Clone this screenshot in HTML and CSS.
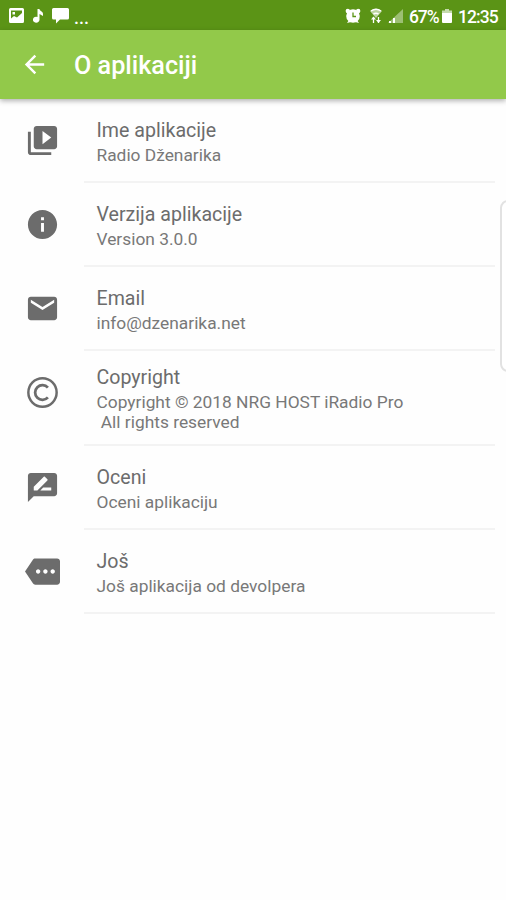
FILE: index.html
```
<!DOCTYPE html>
<html lang="bs">
<head>
  <meta charset="UTF-8">
  <meta name="viewport" content="width=device-width, initial-scale=1.0">
  <title>O aplikaciji</title>
  <link rel="stylesheet" href="styles.css">
</head>
<body>
  <div class="status-bar">
    <div class="status-left">
      <svg width="15" height="15" viewBox="0 0 15 15"><path fill="#fff" fill-rule="evenodd" d="M1.500 0h12a1.500 1.500 0 0 1 1.500 1.500v12a1.500 1.500 0 0 1-1.500 1.500h-12a1.500 1.500 0 0 1-1.500-1.500v-12a1.500 1.500 0 0 1 1.500-1.500zM2 2.500v8l3-2.500 3 1.500 5-4.500V2.500zM3.500 4h2.500v2.500h-2.500z"/></svg>
      <svg class="note" width="10" height="14" viewBox="0 0 10 14"><path fill="#fff" d="M4.500 0h2c0 2 3.500 2 3.500 5v2L6.500 5v5.500A3.300 3 0 1 1 4.500 8z"/></svg>
      <svg class="bubble" width="17" height="16" viewBox="0 0 17 16"><path fill="#fff" d="M1.500 0h14a1.500 1.500 0 0 1 1.500 1.500v8.500a1.500 1.500 0 0 1-1.500 1.500H8l-4 4V11.500H1.500A1.500 1.500 0 0 1 0 10v-8.500A1.500 1.500 0 0 1 1.500 0z"/></svg>
      <span class="dots">...</span>
    </div>
    <div class="status-right">
      <svg width="16" height="16" viewBox="0 0 16 16"><g fill="#fff"><circle cx="8" cy="8" r="6.800"/><circle cx="2.800" cy="3" r="2.200"/><circle cx="13.200" cy="3" r="2.200"/><path d="M2 15l2-3 2 2zM14 15l-2-3-2 2z"/></g><path d="M8 4.500V8.500h3" fill="none" stroke="#5b9416" stroke-width="1.300"/></svg>
      <svg class="wifi" width="12" height="15" viewBox="0 0 12 15"><path d="M0 3Q6-1.500 12 3L6 10z" fill="#fff" opacity=".6"/><path d="M1 3Q6-.5 11 3M3.500 6Q6 4.500 8.500 6" fill="none" stroke="#fff" stroke-width="1.500"/><path d="M3.500 9v6M8.500 9v6" fill="none" stroke="#fff" stroke-width="1.300"/><path d="M1 11.500l2.500-3 2.500 3zM6 12l2.500 3 2.500-3z" fill="#fff"/></svg>
      <svg class="signal" width="15" height="14" viewBox="0 0 15 14"><path fill="#fff" opacity=".4" d="M15 0v14H0z"/><path fill="#fff" d="M1 12h2v2H1zM5 9h2v5H5z"/></svg>
      <span class="battery-text">67%</span>
      <svg class="battery" width="10" height="14" viewBox="0 0 10 14"><path fill="#fff" opacity=".65" d="M3 0h4v1.500h3V5H0V1.500h3z"/><path fill="#fff" d="M0 4h10v9a1 1 0 0 1-1 1H1a1 1 0 0 1-1-1z"/></svg>
      <span class="clock">12:35</span>
    </div>
  </div>

  <header class="toolbar">
    <svg class="back" width="29" height="29" viewBox="0 0 24 24"><path fill="#fff" d="M20 11H7.830l5.590-5.590L12 4l-8 8 8 8 1.410-1.410L7.830 13H20v-2z"/></svg>
    <h1>O aplikaciji</h1>
  </header>

  <main class="list">
    <div class="item">
      <svg class="icon" viewBox="0 0 24 24"><path d="M4 6H2v14c0 1.100.9 2 2 2h14v-2H4V6zm16-4H8c-1.100 0-2 .9-2 2v12c0 1.100.9 2 2 2h12c1.100 0 2-.9 2-2V4c0-1.100-.9-2-2-2zm-8 12.500v-9l6 4.500-6 4.500z"/></svg>
      <div class="item-text">
        <div class="title">Ime aplikacije</div>
        <div class="subtitle">Radio Dženarika</div>
      </div>
    </div>
    <div class="item">
      <svg class="icon" viewBox="0 0 24 24"><path d="M12 2C6.480 2 2 6.480 2 12s4.480 10 10 10 10-4.480 10-10S17.520 2 12 2zm1 15h-2v-6h2v6zm0-8h-2V7h2v2z"/></svg>
      <div class="item-text">
        <div class="title">Verzija aplikacije</div>
        <div class="subtitle">Version 3.0.0</div>
      </div>
    </div>
    <div class="item">
      <svg class="icon" viewBox="0 0 24 24"><path d="M20 4H4c-1.100 0-1.990.9-1.990 2L2 18c0 1.100.9 2 2 2h16c1.100 0 2-.9 2-2V6c0-1.100-.9-2-2-2zm0 4l-8 5-8-5V6l8 5 8-5v2z"/></svg>
      <div class="item-text">
        <div class="title">Email</div>
        <div class="subtitle">info@dzenarika.net</div>
      </div>
    </div>
    <div class="item">
      <svg class="icon" viewBox="0 0 24 24"><g fill="none" stroke="#6c6c6c"><circle cx="12" cy="12" r="9.700" stroke-width="1.700"/><path d="M15.700 8.700A5 5 0 1 0 15.700 15.300" stroke-width="1.900"/></g></svg>
      <div class="item-text">
        <div class="title">Copyright</div>
        <div class="subtitle">Copyright © 2018 NRG HOST iRadio Pro<br>&nbsp;All rights reserved</div>
      </div>
    </div>
    <div class="item">
      <svg class="icon" viewBox="0 0 24 24"><path d="M20 2H4c-1.100 0-1.990.9-1.990 2L2 22l4-4h14c1.100 0 2-.9 2-2V4c0-1.100-.9-2-2-2zM6 14v-2.470l6.880-6.880c.2-.2.510-.2.710 0l1.770 1.770c.2.2.2.510 0 .710L8.470 14H6zm12 0h-7.500l2-2H18v2z"/></svg>
      <div class="item-text">
        <div class="title">Oceni</div>
        <div class="subtitle">Oceni aplikaciju</div>
      </div>
    </div>
    <div class="item">
      <svg class="icon" viewBox="0 0 24 24"><path d="M22 3H7c-.690 0-1.230.350-1.590.880L0 12l5.410 8.110c.360.530.970.890 1.660.890H22c1.100 0 2-.9 2-2V5c0-1.100-.9-2-2-2zM9 13.500c-.830 0-1.500-.670-1.500-1.500s.670-1.500 1.500-1.500 1.500.670 1.500 1.500-.670 1.500-1.500 1.500zm5 0c-.830 0-1.500-.670-1.500-1.500s.670-1.500 1.500-1.500 1.500.670 1.500 1.500-.670 1.500-1.500 1.500zm5 0c-.830 0-1.500-.670-1.500-1.500s.670-1.500 1.500-1.500 1.500.670 1.500 1.500-.670 1.500-1.500 1.500z"/></svg>
      <div class="item-text">
        <div class="title">Još</div>
        <div class="subtitle">Još aplikacija od devolpera</div>
      </div>
    </div>
  </main>

  <!-- edge panel handle -->
  <div class="edge-handle"></div>
</body>
</html>
```

FILE: styles.css
```
* {
  box-sizing: border-box;
}
body {
  margin: 0;
  height: 900px;
  position: relative;
  overflow: hidden;
  background-color: #fefefe;
  font-family: Roboto, sans-serif;
}
svg {
  display: block;
  flex-shrink: 0;
}
.status-bar {
  height: 30px;
  padding: 0 8px 0 9px;
  display: flex;
  justify-content: space-between;
  background-color: #5b9416;
  color: #fff;
}
.status-left,
.status-right {
  display: flex;
  align-items: center;
  height: 31px;
}
.note {
  margin-left: 9px;
}
.bubble {
  margin-left: 9px;
}
.dots {
  margin: 3px 0 0 5px;
  font-size: 18px;
  font-weight: 500;
}
.wifi {
  margin-left: 9px;
}
.signal {
  margin-left: 6px;
}
.battery-text {
  width: 29px;
  margin: 2px 0 0 6px;
  font-size: 17.500px;
  font-weight: 500;
  letter-spacing: -1.100px;
}
.battery {
  margin-left: 4px;
}
.clock {
  width: 40px;
  margin: 2px 0 0 6px;
  font-size: 17.500px;
  font-weight: 500;
  letter-spacing: -0.900px;
}
.toolbar {
  height: 69px;
  padding-left: 20px;
  display: flex;
  align-items: center;
  background-color: #92c94a;
  color: #fff;
  box-shadow: 0 2px 5px rgba(0, 0, 0, 0.3);
}
.toolbar h1 {
  margin: 2px 0 0 25px;
  font-size: 25.200px;
  font-weight: 500;
}
.item {
  min-height: 84px;
  display: flex;
  align-items: flex-start;
  padding: 0 11px 0 24.500px;
}
.icon {
  width: 35px;
  height: 35px;
  margin-top: 24px;
  fill: #6c6c6c;
}
.item-text {
  flex: 1;
  min-height: 84px;
  margin-left: 24.500px;
  padding: 14px 0 12px 12.500px;
  display: flex;
  flex-direction: column;
  justify-content: center;
  border-bottom: 2px solid #f3f3f3;
}
.title {
  font-size: 19.600px;
  line-height: 26px;
  color: #6c6c6c;
}
.subtitle {
  margin-top: 1px;
  font-size: 17.350px;
  line-height: 20px;
  color: #787878;
}
.edge-handle {
  position: absolute;
  top: 200px;
  right: -12px;
  width: 18px;
  height: 172px;
  border: 2px solid #e2e2e2;
  border-radius: 8px;
  background-color: #fff;
}
```
